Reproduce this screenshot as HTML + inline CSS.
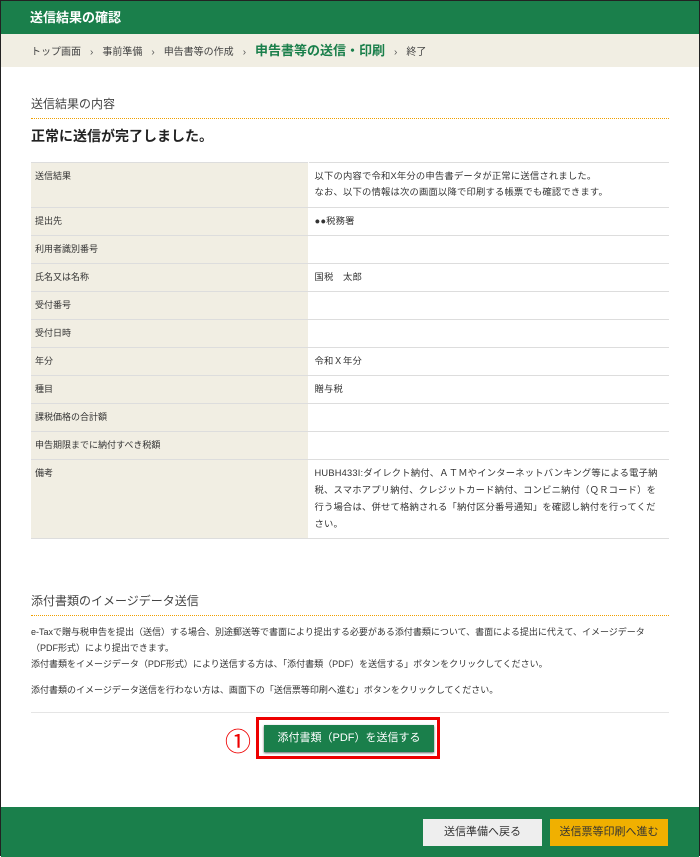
<!DOCTYPE html>
<html><head><meta charset="utf-8"><style>
*{margin:0;padding:0;box-sizing:border-box}
body{width:700px;height:856px;overflow:hidden;font-family:"Liberation Sans","Noto Sans CJK JP",sans-serif;color:#333;background:#fff;position:relative;border:1px solid #222}
.hdr{position:absolute;left:0;top:0;width:698px;height:33px;background:#1a7f4b;color:#fff;font-weight:bold;font-size:13px;line-height:33px;padding-left:29px}
.bc{position:absolute;left:0;top:33px;width:698px;height:33px;background:#f1eee3;font-size:10px;line-height:33px;padding-left:30px;color:#444}
.bc b{color:#1a7f4b;font-size:13px}
.bc i{font-style:normal;margin:0 9px;color:#555}
.h2{position:absolute;left:30px;width:638px;font-size:12px;color:#444;border-bottom:1px dotted #f0a000;padding-bottom:6px}
.ok{position:absolute;left:30px;top:125px;font-size:14px;font-weight:bold;color:#222}
table{position:absolute;left:30px;top:161px;width:638px;border-collapse:collapse;font-size:9px;table-layout:fixed}
tr{height:28px}
td{border-top:1px solid #ddd;border-bottom:1px solid #ddd;vertical-align:top;padding:5px 4px 0;line-height:16px;overflow:hidden}
td.l{background:#f1eee3;width:277px;border-right:1px solid #fff}
td.r{padding-left:6px;font-size:9.3px;letter-spacing:.2px}
p.t{position:absolute;left:30px;font-size:9px;color:#333;line-height:16px;width:640px}
.rule{position:absolute;left:30px;top:711px;width:638px;border-top:1px solid #e5e5e5}
.red{position:absolute;left:255px;top:716px;width:184px;height:42px;border:3px solid #e00}
.gb{position:absolute;left:263px;top:724px;width:170px;height:27px;background:#1a7f4b;color:#fff;font-size:11px;line-height:27px;text-align:center;box-shadow:0 1px 2px #666}
.c1{position:absolute;left:224px;top:727px;font-size:26px;color:#e00;line-height:28px}
.ft{position:absolute;left:0;top:806px;width:698px;height:50px;background:#1a7f4b}
.b1,.b2{position:absolute;top:818px;height:27px;font-size:11px;line-height:27px;text-align:center}
.b1{left:422px;width:119px;background:#eee;color:#333}
.b2{left:549px;width:118px;background:#f0b000;color:#333}
</style></head><body>
<div class="hdr">送信結果の確認</div>
<div class="bc">トップ画面<i>›</i>事前準備<i>›</i>申告書等の作成<i>›</i><b>申告書等の送信・印刷</b><i>›</i>終了</div>
<div class="h2" style="top:94px">送信結果の内容</div>
<div class="ok">正常に送信が完了しました。</div>
<table>
<tr style="height:45px"><td class="l">送信結果</td><td class="r">以下の内容で令和X年分の申告書データが正常に送信されました。<br>なお、以下の情報は次の画面以降で印刷する帳票でも確認できます。</td></tr>
<tr><td class="l">提出先</td><td class="r">●●税務署</td></tr>
<tr><td class="l">利用者識別番号</td><td class="r"></td></tr>
<tr><td class="l">氏名又は名称</td><td class="r">国税　太郎</td></tr>
<tr><td class="l">受付番号</td><td class="r"></td></tr>
<tr><td class="l">受付日時</td><td class="r"></td></tr>
<tr><td class="l">年分</td><td class="r">令和Ｘ年分</td></tr>
<tr><td class="l">種目</td><td class="r">贈与税</td></tr>
<tr><td class="l">課税価格の合計額</td><td class="r"></td></tr>
<tr><td class="l">申告期限までに納付すべき税額</td><td class="r"></td></tr>
<tr style="height:79px"><td class="l">備考</td><td class="r" style="line-height:17px;padding-right:8px">HUBH433I:ダイレクト納付、ＡＴＭやインターネットバンキング等による電子納税、スマホアプリ納付、クレジットカード納付、コンビニ納付（ＱＲコード）を行う場合は、併せて格納される「納付区分番号通知」を確認し納付を行ってください。</td></tr>
</table>
<div class="h2" style="top:591px">添付書類のイメージデータ送信</div>
<p class="t" style="top:623px">e-Taxで贈与税申告を提出（送信）する場合、別途郵送等で書面により提出する必要がある添付書類について、書面による提出に代えて、イメージデータ（PDF形式）により提出できます。<br>添付書類をイメージデータ（PDF形式）により送信する方は、「添付書類（PDF）を送信する」ボタンをクリックしてください。</p>
<p class="t" style="top:681px">添付書類のイメージデータ送信を行わない方は、画面下の「送信票等印刷へ進む」ボタンをクリックしてください。</p>
<div class="rule"></div>
<div class="c1">①</div>
<div class="red"></div>
<div class="gb">添付書類（PDF）を送信する</div>
<div class="ft"></div>
<div class="b1">送信準備へ戻る</div>
<div class="b2">送信票等印刷へ進む</div>
</body></html>
